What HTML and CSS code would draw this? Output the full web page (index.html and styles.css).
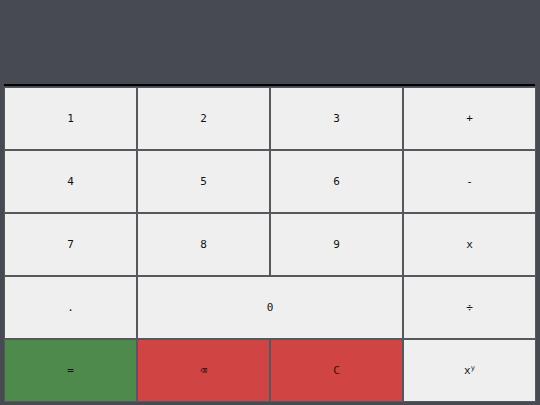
FILE: index.html
```html
<!DOCTYPE html>
<html>
<head>
<meta charset="utf-8">
<link rel="stylesheet" href="styles.css">
</head>
<body>
<div class="calc">
  <div class="display"></div>
  <div class="keys">
    <button class="key">1</button>
    <button class="key">2</button>
    <button class="key">3</button>
    <button class="key">+</button>
    <button class="key">4</button>
    <button class="key">5</button>
    <button class="key">6</button>
    <button class="key">-</button>
    <button class="key">7</button>
    <button class="key">8</button>
    <button class="key">9</button>
    <button class="key">x</button>
    <button class="key">.</button>
    <button class="key wide">0</button>
    <button class="key">÷</button>
    <button class="key eq">=</button>
    <button class="key del">⌫</button>
    <button class="key del">C</button>
    <button class="key">x<sup>y</sup></button>
  </div>
</div>
</body>
</html>
```
FILE: styles.css
```css
html, body {
  margin: 0;
  padding: 0;
  background: #474a52;
  width: 540px;
  height: 405px;
  overflow: hidden;
}
.calc {
  padding: 0 4px;
}
.display {
  height: 84px;
  border-bottom: 2px solid #000;
  margin-right: 1px;
}
.keys {
  margin-top: 1px;
  display: grid;
  grid-template-columns: repeat(4, 133px);
  grid-template-rows: repeat(5, 63px);
}
.key {
  margin: 0;
  padding: 0;
  border: 1px solid #55585d;
  background: #efefef;
  font-family: "DejaVu Sans Mono", monospace;
  font-size: 11px;
  color: #111;
}
.wide {
  grid-column: span 2;
}
.eq {
  background: #4d8a4b;
}
.del {
  background: #d14444;
  color: #3a0f0f;
}
sup {
  font-size: 7px;
  vertical-align: 4px;
}
```
